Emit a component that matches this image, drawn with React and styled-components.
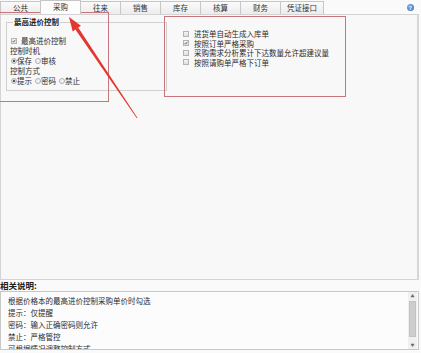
import React from "react";
import styled, { createGlobalStyle } from "styled-components";

const tabs = ["公共", "采购", "往来", "销售", "库存", "核算", "财务", "凭证接口"];

const options = [
  { text: "进货单自动生成入库单", checked: false },
  { text: "按照订单严格采购", checked: true },
  { text: "采购需求分析累计下达数量允许超建议量", checked: false },
  { text: "按照请购单严格下订单", checked: false },
];

const notes = [
  "根据价格本的最高进价控制采购单价时勾选",
  "提示：仅提醒",
  "密码：输入正确密码则允许",
  "禁止：严格管控",
  "可根据情况调整控制方式",
];

const Check = ({ checked }) => (
  <CheckBox>
    {checked && (
      <svg width="6" height="6" viewBox="0 0 6 6">
        <path d="M1 3.2 L2.4 4.6 L5 1.2" fill="none" stroke="#333" strokeWidth="1" />
      </svg>
    )}
  </CheckBox>
);

const App = () => {
  return (
    <>
      <Global />
      <Page>
        <TabBar>
          {tabs.map((t, i) => (
            <Tab key={t} active={i === 1} wide={t.length > 2}>
              {t}
            </Tab>
          ))}
          <Help>?</Help>
        </TabBar>

        <Panel>
          <GroupBox>
            <Legend>最高进价控制</Legend>
            <Row indent>
              <Check checked />
              <span>最高进价控制</span>
            </Row>
            <Row>控制时机</Row>
            <Row>
              <Radio on />保存
              <Radio />审核
            </Row>
            <Row>控制方式</Row>
            <Row>
              <Radio on />提示
              <Radio />密码
              <Radio />禁止
            </Row>
          </GroupBox>

          <OptionList>
            {options.map((o) => (
              <Option key={o.text}>
                <Check checked={o.checked} />
                <span>{o.text}</span>
              </Option>
            ))}
          </OptionList>
        </Panel>

        <Caption>相关说明:</Caption>
        <Notes>
          <NoteText>
            {notes.map((n) => (
              <div key={n}>{n}</div>
            ))}
          </NoteText>
          <ScrollBar>
            <ScrollBtn>▲</ScrollBtn>
            <Track>
              <Thumb />
            </Track>
            <ScrollBtn>▼</ScrollBtn>
          </ScrollBar>
        </Notes>

        <Mark left={-2} top={12} w={111} h={90} />
        <Mark left={164} top={16} w={182} h={81} />
        <Arrow viewBox="0 0 421 353">
          <polygon points="69,17 80.9,25.8 72.7,31.4" fill="#e2362e" />
          <polygon points="78.2,27.6 75.4,29.6 136.8,118.2 137.4,117.8" fill="#e2362e" />
        </Arrow>
      </Page>
    </>
  );
};

const Global = createGlobalStyle`
  body {
    margin: 0;
    background: #fafafa;
    font-family: "Noto Sans CJK SC", "Noto Sans", sans-serif;
    color: #2b2b2b;
  }
`;

const Page = styled.div`
  position: relative;
  width: 421px;
  height: 353px;
  overflow: hidden;
  background: #fafafa;
  display: flex;
  flex-direction: column;
`;

const TabBar = styled.div`
  display: flex;
  align-items: flex-end;
  height: 14px;
  padding-left: 1px;
`;

const Tab = styled.div`
  box-sizing: border-box;
  width: ${(p) => (p.wide ? "44px" : "41px")};
  height: ${(p) => (p.active ? "14px" : "13px")};
  margin-left: -1px;
  border: 1px solid #c6c6c6;
  border-bottom: none;
  background: ${(p) =>
    p.active ? "#fdfdfd" : "linear-gradient(#fbfbfb, #ececec)"};
  font-size: 7.5px;
  line-height: 12px;
  text-align: center;
  color: #333;
  position: relative;
  z-index: ${(p) => (p.active ? 1 : 0)};
`;

const Help = styled.div`
  margin-left: auto;
  margin-right: 7px;
  align-self: center;
  width: 7px;
  height: 7px;
  border-radius: 50%;
  background: radial-gradient(circle at 35% 35%, #8ab4ea, #2f66b8);
  color: #fff;
  font-size: 5px;
  line-height: 7px;
  text-align: center;
  font-weight: bold;
`;

const Panel = styled.div`
  box-sizing: border-box;
  width: 419px;
  height: 266px;
  border: 1px solid #d4d4d4;
  border-right: 2px solid #d6d6d6;
  background: #f9f8f9;
  display: flex;
  align-items: flex-start;
  padding: 2px 0 0 5px;
`;

const GroupBox = styled.fieldset`
  box-sizing: border-box;
  margin: 0;
  width: 161px;
  height: 74px;
  min-width: 0;
  padding: 9px 0 0 3px;
  border: 1px solid #d0d0d0;
`;

const Legend = styled.legend`
  margin-left: 3px;
  padding: 0 1px;
  font-size: 7.5px;
  line-height: 10px;
  font-weight: bold;
  color: #222;
`;

const Row = styled.div`
  display: flex;
  align-items: center;
  height: 10px;
  font-size: 7.5px;
  line-height: 10px;
  padding-left: ${(p) => (p.indent ? "1px" : "0")};
  white-space: nowrap;
`;

const CheckBox = styled.span`
  box-sizing: border-box;
  width: 6px;
  height: 6px;
  border: 1px solid #b4b4b4;
  background: linear-gradient(#f4f4f4, #dedede);
  margin-right: 4px;
  display: inline-flex;
  align-items: center;
  justify-content: center;
  flex-shrink: 0;
  & svg {
    display: block;
  }
`;

const Radio = styled.span`
  box-sizing: border-box;
  width: 6px;
  height: 6px;
  border-radius: 50%;
  border: 1px solid #b0b0b0;
  background: ${(p) =>
    p.on ? "radial-gradient(circle, #555 0 1.2px, #e6e6e6 1.6px)" : "#f2f2f2"};
  margin: 0 0 0 ${(p) => (p.on ? "1px" : "3px")};
  flex-shrink: 0;
`;

const OptionList = styled.div`
  margin: 12px 0 0 16px;
  display: flex;
  flex-direction: column;
`;

const Option = styled.div`
  display: flex;
  align-items: center;
  height: 9.5px;
  font-size: 7.5px;
  line-height: 9.5px;
  white-space: nowrap;
  & > span:first-child {
    margin-right: 5px;
  }
`;

const Caption = styled.div`
  height: 11px;
  font-size: 8.5px;
  line-height: 11px;
  font-weight: bold;
  color: #1e1e1e;
`;

const Notes = styled.div`
  box-sizing: border-box;
  width: 419px;
  height: 59px;
  border: 1px solid #c8c8c8;
  background: #fdfcfd;
  display: flex;
  overflow: hidden;
`;

const NoteText = styled.div`
  flex: 1;
  padding: 3px 0 0 7px;
  font-size: 7.5px;
  line-height: 12px;
  color: #2b2b2b;
`;

const ScrollBar = styled.div`
  width: 9px;
  margin-right: 1px;
  display: flex;
  flex-direction: column;
  background: #f0f0f0;
`;

const ScrollBtn = styled.div`
  height: 8px;
  font-size: 4px;
  line-height: 8px;
  text-align: center;
  color: #666;
`;

const Track = styled.div`
  flex: 1;
  padding: 1px 1px 4px;
  display: flex;
`;

const Thumb = styled.div`
  flex: 1;
  background: #cdcdcd;
  border: 1px solid #c2c2c2;
`;

const Mark = styled.div`
  position: absolute;
  box-sizing: border-box;
  left: ${(p) => p.left}px;
  top: ${(p) => p.top}px;
  width: ${(p) => p.w}px;
  height: ${(p) => p.h}px;
  border: 1.5px solid #c8767e;
  pointer-events: none;
`;

const Arrow = styled.svg`
  position: absolute;
  left: 0;
  top: 0;
  width: 421px;
  height: 353px;
  pointer-events: none;
`;

export default App;
